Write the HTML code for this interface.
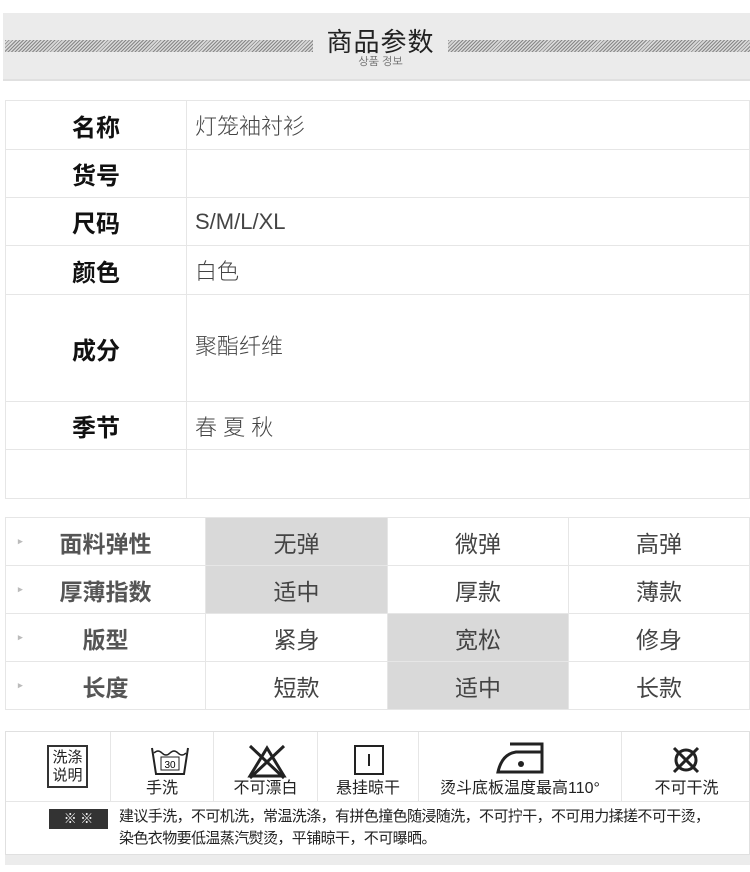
<!DOCTYPE html>
<html><head><meta charset="utf-8"><style>
*{margin:0;padding:0;box-sizing:border-box}
body{width:750px;height:872px;background:#fff;font-family:"Liberation Sans","Noto Sans CJK SC",sans-serif;position:relative;overflow:hidden;color:#333}
.abs{position:absolute}
.hdr{left:3px;top:13px;width:747px;height:68px;background:#ebebeb;border-bottom:2px solid #e0e0e0}
.stripe{top:40px;height:12px;background:repeating-linear-gradient(135deg,#888 0 1px,#d8d8d8 1px 2.5px)}
.t1{left:5px;top:100px;width:745px;border:1px solid #e6e6e6;border-collapse:collapse}
table td{border:1px solid #e6e6e6}
.t1 td.l{width:181px;text-align:center;font-weight:bold;font-size:24px;color:#111}
.t1 td.v{padding-left:8px;font-size:22px;color:#444;vertical-align:middle;font-weight:300}
.t2{left:5px;top:517px;width:745px;border-collapse:collapse}
.t2 td{height:48px;text-align:center;font-size:23px;color:#444}
.t2 td.l{width:200px;font-weight:bold;color:#555;position:relative}
.t2 td.l:before{content:"▸";position:absolute;left:12px;top:18px;font-size:9px;color:#bbb}
.g{background:#d9d9d9}
.care{left:5px;top:731px;width:745px;height:124px;border:1px solid #e0e0e0}
.cell{position:absolute;top:0;height:69px;border-right:1px solid #e6e6e6;text-align:center;font-size:16px;color:#222}
.cell span{position:absolute;bottom:3px;left:0;right:0}
</style></head><body>
<div class="abs hdr"></div>
<div class="abs stripe" style="left:5px;width:308px"></div>
<div class="abs stripe" style="left:448px;width:302px"></div>
<div class="abs" style="left:313px;top:22px;width:135px;text-align:center;font-size:26px;color:#222;letter-spacing:1px">商品参数</div>
<div class="abs" style="left:313px;top:55px;width:135px;text-align:center;font-size:11px;color:#666;font-family:'NanumGothic','Liberation Sans',sans-serif">상품 정보</div>

<table class="abs t1">
<tr style="height:49px"><td class="l">名称</td><td class="v">灯笼袖衬衫</td></tr>
<tr style="height:48px"><td class="l">货号</td><td class="v"></td></tr>
<tr style="height:48px"><td class="l">尺码</td><td class="v">S/M/L/XL</td></tr>
<tr style="height:49px"><td class="l">颜色</td><td class="v">白色</td></tr>
<tr style="height:107px"><td class="l">成分</td><td class="v" style="vertical-align:top;padding-top:34px">聚酯纤维</td></tr>
<tr style="height:48px"><td class="l">季节</td><td class="v">春 夏 秋</td></tr>
<tr style="height:49px"><td class="l"></td><td class="v"></td></tr>
</table>

<table class="abs t2">
<tr><td class="l">面料弹性</td><td class="g" style="width:182px">无弹</td><td style="width:181px">微弹</td><td>高弹</td></tr>
<tr><td class="l">厚薄指数</td><td class="g">适中</td><td>厚款</td><td>薄款</td></tr>
<tr><td class="l">版型</td><td>紧身</td><td class="g">宽松</td><td>修身</td></tr>
<tr><td class="l">长度</td><td>短款</td><td class="g">适中</td><td>长款</td></tr>
</table>

<div class="abs care">
<div class="cell" style="left:0;width:105px"><div style="position:absolute;left:41px;top:13px;width:41px;height:43px;border:2px solid #333;font-size:15px;line-height:18px;padding-top:2px">洗涤<br>说明</div></div>
<div class="cell" style="left:105px;width:103px"><svg style="position:absolute;left:40px;top:14px" width="38" height="30"><path d="M1 2 L5 28 H33 L37 2" fill="none" stroke="#222" stroke-width="2"/><path d="M3 7 q4 -4 8 0 q4 4 8 0 q4 -4 8 0 q4 4 8 0" fill="none" stroke="#222" stroke-width="1.5"/><rect x="10" y="11" width="18" height="13" fill="none" stroke="#222"/><text x="19" y="22" font-size="10" text-anchor="middle" font-family="Liberation Sans">30</text></svg><span>手洗</span></div>
<div class="cell" style="left:208px;width:104px"><svg style="position:absolute;left:32px;top:10px" width="42" height="38"><path d="M21 6 L38 34 H4 Z" fill="none" stroke="#222" stroke-width="3"/><path d="M4 4 L38 36 M38 4 L4 36" stroke="#222" stroke-width="3"/></svg><span>不可漂白</span></div>
<div class="cell" style="left:312px;width:101px"><svg style="position:absolute;left:36px;top:13px" width="30" height="30"><rect x="1" y="1" width="28" height="28" fill="none" stroke="#222" stroke-width="2"/><path d="M15 9 V21" stroke="#222" stroke-width="2"/></svg><span>悬挂晾干</span></div>
<div class="cell" style="left:413px;width:203px"><svg style="position:absolute;left:77px;top:10px" width="50" height="32"><path d="M14 2 H46 V30 H2 Q6 12 20 10 H46" fill="none" stroke="#222" stroke-width="3"/><circle cx="25" cy="22" r="3" fill="#222"/></svg><span>烫斗底板温度最高110°</span></div>
<div class="cell" style="left:616px;width:129px;border-right:none"><svg style="position:absolute;left:48px;top:12px" width="32" height="32"><circle cx="16" cy="16" r="10" fill="none" stroke="#222" stroke-width="3"/><path d="M4 4 L28 28 M28 4 L4 28" stroke="#222" stroke-width="3"/></svg><span>不可干洗</span></div>
<div style="position:absolute;left:0;right:0;top:69px;border-top:1px solid #e6e6e6"></div>
<div style="position:absolute;left:43px;top:77px;width:59px;height:20px;background:#333;color:#fff;font-size:13px;text-align:center;line-height:20px">※ ※</div>
<div style="position:absolute;left:113px;top:74px;font-size:15px;line-height:22px;color:#222;white-space:nowrap;letter-spacing:-0.6px">建议手洗，不可机洗，常温洗涤，有拼色撞色随浸随洗，不可拧干，不可用力揉搓不可干烫，<br>染色衣物要低温蒸汽熨烫，平铺晾干，不可曝晒。</div>
</div>
<div class="abs" style="left:5px;top:855px;width:745px;height:10px;background:#ececec"></div>
</body></html>
